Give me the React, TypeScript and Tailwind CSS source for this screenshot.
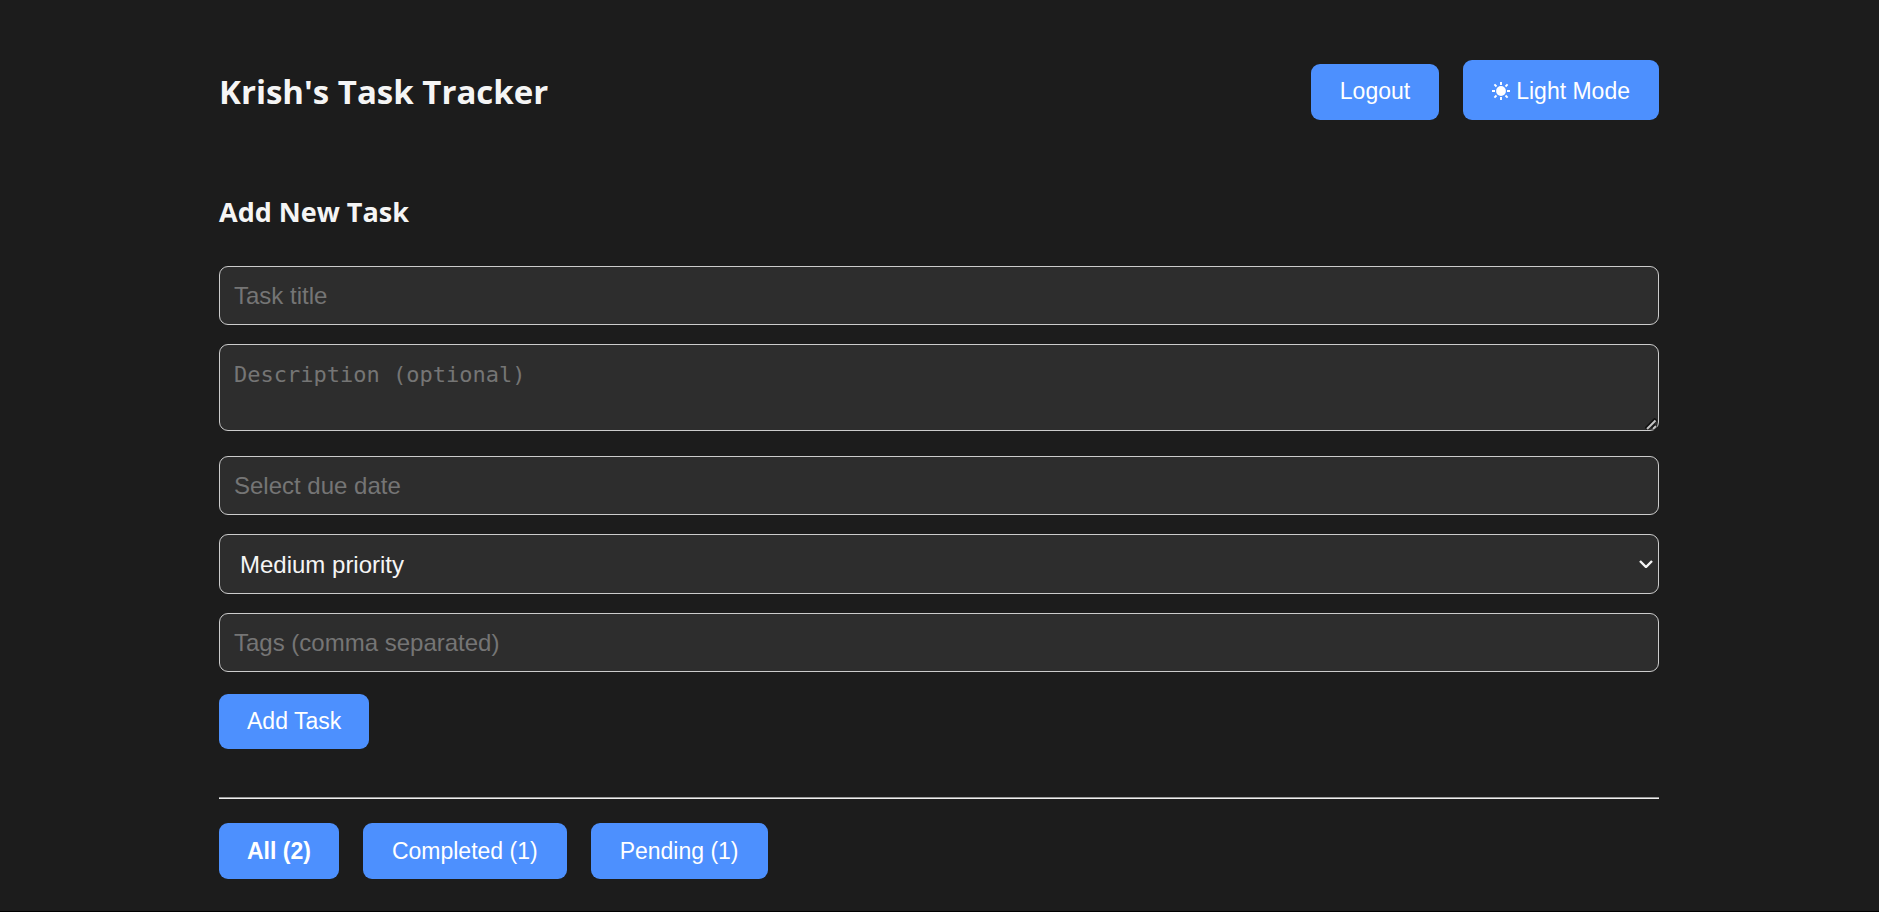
import { useState } from "react";
import type { ButtonHTMLAttributes } from "react";

const boxClass =
  "block w-full rounded-[9px] border border-[#cccccc] bg-[#2d2d2d] text-[#f5f5f5] placeholder:text-[#757575]";
const fieldClass = `${boxClass} font-['Liberation_Sans',Arial,sans-serif] text-2xl`;

function Button({ className = "", ...props }: ButtonHTMLAttributes<HTMLButtonElement>) {
  return (
    <button
      className={`cursor-pointer rounded-[9px] bg-[#4d90fe] font-['Liberation_Sans',Arial,sans-serif] text-[23px] leading-[26px] text-white ${className}`}
      {...props}
    />
  );
}

function SunIcon() {
  return (
    <svg viewBox="0 0 18 18" className="size-[18px]" aria-hidden="true">
      <circle cx="9" cy="9" r="4.9" fill="currentColor" />
      <path
        d="M9 0v3M9 15v3M0 9h3M15 9h3M2.400 2.400l2.100 2.100M13.500 13.500l2.100 2.100M2.400 15.600l2.100-2.100M13.500 4.500l2.100-2.100"
        stroke="currentColor"
        strokeWidth="1.9"
      />
    </svg>
  );
}

function ChevronIcon() {
  return (
    <svg
      viewBox="0 0 14 8"
      className="pointer-events-none absolute top-[26px] right-1.5 h-2 w-3.5"
      aria-hidden="true"
    >
      <path d="M1 1l6 6 6-6" fill="none" stroke="#f5f5f5" strokeWidth="2.4" />
    </svg>
  );
}

function ResizeGrip() {
  return (
    <svg
      viewBox="0 0 12 12"
      className="pointer-events-none absolute right-0.5 bottom-px size-3"
      aria-hidden="true"
    >
      <path d="M1 11L11 1M7.5 11L11 7.5" fill="none" stroke="#111111" strokeWidth="4" />
      <path d="M2 11L10.5 2.5M8 11L11 8" fill="none" stroke="#c4c4c4" strokeWidth="2" />
    </svg>
  );
}

const filters = [
  { id: "all", label: "All", count: 2 },
  { id: "completed", label: "Completed", count: 1 },
  { id: "pending", label: "Pending", count: 1 },
];

export default function App() {
  const [filter, setFilter] = useState("all");

  return (
    <div className="min-h-screen border-b border-black bg-[#1c1c1c] pt-[60px] pr-[25px] pb-8 pl-6 font-['Open_Sans','Noto_Sans',sans-serif] text-[#f5f5f5]">
      <div className="mx-auto max-w-[1440px]">
        <header className="flex flex-wrap items-center justify-between gap-6">
          <h1 className="pt-1 text-[33px] leading-[48px] font-bold">Krish's Task Tracker</h1>
          <div className="flex items-end gap-6">
            <Button type="button" className="px-[29px] pt-3.5 pb-4">Logout</Button>
            <Button type="button" className="flex items-center gap-1.5 px-[29px] pt-[18px] pb-4">
              <SunIcon />
              Light Mode
            </Button>
          </div>
        </header>

        <form className="pt-[72px]" onSubmit={(e) => e.preventDefault()}>
          <h2 className="mb-[34px] text-[27px] leading-10 font-bold">Add New Task</h2>
          <div className="flex flex-col gap-[19px]">
            <input aria-label="Task title" placeholder="Task title" className={`${fieldClass} h-[59px] px-3.5`} />
            <div className="relative mb-1.5">
              <textarea
                aria-label="Description"
                placeholder="Description (optional)"
                rows={2}
                className={`${boxClass} h-[87px] resize-y px-3.5 py-4 font-['DejaVu_Sans_Mono',monospace] text-[22px] leading-7 [&::-webkit-resizer]:hidden`}
              />
              <ResizeGrip />
            </div>
            <input aria-label="Due date" placeholder="Select due date" className={`${fieldClass} h-[59px] px-3.5`} />
            <div className="relative">
              <select
                aria-label="Priority"
                defaultValue="medium"
                className={`${fieldClass} h-[60px] appearance-none pt-0.5 pr-8 pl-5`}
              >
                <option value="low">Low priority</option>
                <option value="medium">Medium priority</option>
                <option value="high">High priority</option>
              </select>
              <ChevronIcon />
            </div>
            <input aria-label="Tags" placeholder="Tags (comma separated)" className={`${fieldClass} h-[59px] px-3.5`} />
          </div>
          <Button type="submit" className="mt-[22px] px-7 pt-3.5 pb-[15px]">Add Task</Button>
        </form>

        <hr className="mt-12 mb-6 h-0.5 border-t border-b border-t-[#9a9a9a] border-b-[#eeeeee]" />

        <div className="flex flex-wrap gap-6">
          {filters.map((f) => (
            <Button
              key={f.id}
              type="button"
              aria-pressed={filter === f.id}
              onClick={() => setFilter(f.id)}
              className={filter === f.id ? "px-7 py-[15px] font-bold" : "px-[29px] py-[15px]"}
            >
              {`${f.label} (${f.count})`}
            </Button>
          ))}
        </div>
      </div>
    </div>
  );
}
